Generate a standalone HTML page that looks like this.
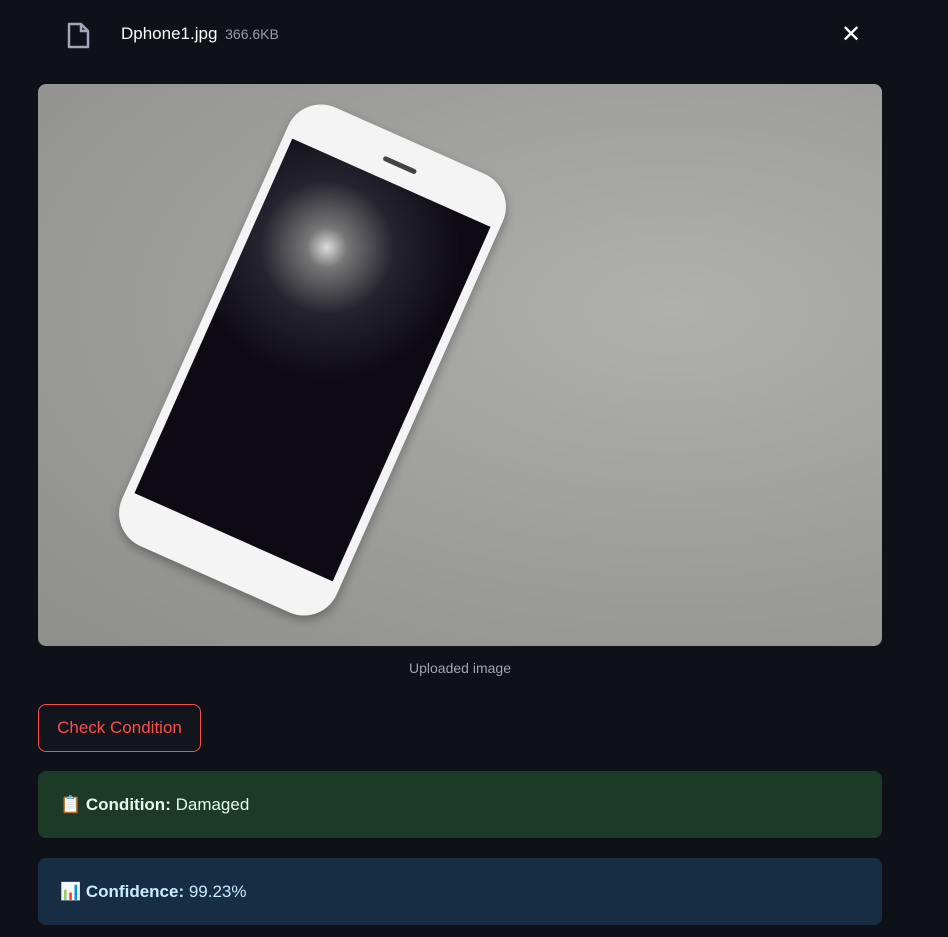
<!DOCTYPE html>
<html><head><meta charset="utf-8"><style>
body{margin:0;background:#0e1117;width:948px;height:937px;overflow:hidden;font-family:"Liberation Sans",sans-serif;position:relative;color:#fafafa}
.abs{position:absolute}
</style></head><body>
<svg class="abs" style="left:66px;top:22px" width="26" height="28" viewBox="0 0 26 28"><path d="M3 2h12l7 7v16H3z" fill="none" stroke="#a3a8b8" stroke-width="2.5" stroke-linejoin="round"/><path d="M15 2v7h7" fill="none" stroke="#a3a8b8" stroke-width="2.5"/></svg>
<div class="abs" style="left:121px;top:24px;font-size:17px;color:#fafafa">Dphone1.jpg <span style="font-size:14px;color:#9a9ca5;margin-left:3px">366.6KB</span></div>
<div class="abs" style="left:841px;top:20px;font-size:24px;color:#fff">✕</div>
<div class="abs" style="left:38px;top:84px;width:844px;height:562px;border-radius:8px;overflow:hidden;background:radial-gradient(ellipse at 75% 40%,#b0b0ae 0%,#a2a2a0 40%,#8e8e8c 100%)">
<div class="abs" style="left:157px;top:36px;width:235px;height:480px;background:#f4f4f4;border-radius:36px;transform:rotate(24deg);transform-origin:center;box-shadow:2px 4px 10px rgba(0,0,0,.3)">
<div class="abs" style="left:9px;top:46px;width:217px;height:388px;background:#0d0a14;background-image:radial-gradient(circle at 35% 22%,#ddd 0,#777 6%,rgba(60,60,70,.5) 20%,transparent 40%)"></div>
<div class="abs" style="left:100px;top:24px;width:36px;height:5px;background:#444;border-radius:3px"></div>
</div></div>
<div class="abs" style="left:0;width:920px;top:660px;text-align:center;font-size:14px;color:#a3a5ad">Uploaded image</div>
<div class="abs" style="left:38px;top:704px;width:163px;height:48px;border:1px solid #ff4b4b;border-radius:8px;box-sizing:border-box;color:#ff4b4b;font-size:17px;line-height:46px;text-align:center;background:#12151c">Check Condition</div>
<div class="abs" style="left:38px;top:771px;width:844px;height:67px;border-radius:8px;background:#1b3a28;color:#dffde9;font-size:17px;line-height:67px;padding-left:22px;box-sizing:border-box">📋 <b>Condition:</b> Damaged</div>
<div class="abs" style="left:38px;top:858px;width:844px;height:67px;border-radius:8px;background:#172d43;color:#c7ebff;font-size:17px;line-height:67px;padding-left:22px;box-sizing:border-box">📊 <b>Confidence:</b> 99.23%</div>
</body></html>
